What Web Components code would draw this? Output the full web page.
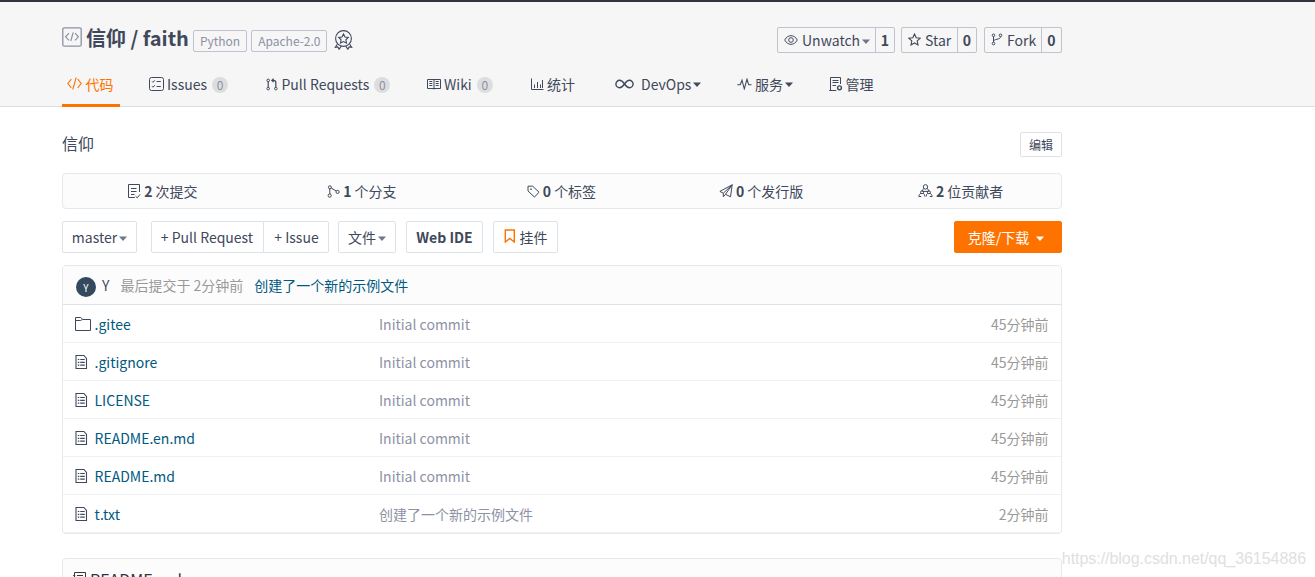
<!DOCTYPE html>
<html lang="zh-CN">
<head>
<meta charset="utf-8">
<title>信仰 / faith</title>
<style>
  html, body {
    margin: 0;
    height: 100%;
    overflow: hidden;
    background: #fff;
  }

  body {
    font-family: "Noto Sans CJK SC", sans-serif;
    font-size: 14px;
    line-height: 20px;
    color: #40485b;
  }
</style>
</head>
<body>
<repo-page></repo-page>

<script>
/**
 * <repo-icon> - Line icon
 *
 * @attr {string} name - key of ICONS
 */
const ICONS = {
  repo: [20, 20, '<rect x=".8" y=".8" width="18.4" height="18.4" rx="1.5" stroke-width="1.3"/><path d="M7 6.2 3.6 9.8 7 13.4M13 6.2l3.4 3.6-3.4 3.6M11.2 5.4 8.8 14" stroke-width="1.2"/>'],
  medal: [20, 20, '<circle cx="9.5" cy="8.5" r="7.9" stroke-width="1.1"/><path stroke-width="1.1" d="m9.5 4 1.5 3 3.300.5-2.400 2.300.6 3.200-3-1.500-3 1.500.6-3.200-2.400-2.300L8 7z"/><path stroke-width="1.100" d="m3.300 14.200-2 3 2.500-.3 1.300 2.300 2.200-3M15.700 14.200l2 3-2.500-.3-1.300 2.300-2.200-3"/>'],
  code: [15, 14, '<path stroke-width="1.100" d="M4.300 2.200.8 6.500l3.500 4.300M10.700 2.200l3.500 4.300-3.500 4.300M9.200.5 5.800 12.500"/>'],
  issues: [15, 14, '<rect x=".5" y=".5" width="14" height="13" rx="2"/><path d="m3 4.300 1 1 1.800-2M3 9.200l1 1 1.800-2M7.600 4.500h4.200M7.600 9.500h4.200"/>'],
  pull: [12, 13, '<circle cx="2.200" cy="2.400" r="1.300"/><circle cx="2.200" cy="10.600" r="1.300"/><circle cx="9.800" cy="10.600" r="1.300"/><path stroke-width="1.200" d="M2.200 3.800v5.400M9.800 9.200V4.600c0-1.500-.6-2.200-2-2.200H6M7.600.6 5.800 2.400l1.800 1.800"/>'],
  wiki: [14, 12, '<path d="M.5 1.500h13v9H.5zM7 1.500v10M2.300 3.500h3M2.300 5.500h3M2.300 7.500h3M8.700 3.500h3M8.700 5.500h3M8.700 7.500h3"/>'],
  chart: [13, 13, '<path d="M.5.5v11h12M3.500 6.500v3.500M6.500 4v6M9.500 6.500v3.500M11.500 2v8"/>'],
  infinity: [19, 10, '<path stroke-width="1.400" d="M9.500 5C7.600 2.300 6.400 1.300 4.600 1.300a3.700 3.700 0 0 0 0 7.400C6.400 8.700 7.600 7.700 9.500 5s3.100-3.700 4.900-3.700a3.700 3.700 0 0 1 0 7.400C12.600 8.700 11.400 7.700 9.500 5z"/>'],
  pulse: [15, 12, '<path stroke-width="1.100" d="M.3 6.800h2.900L5 2.200l2.300 8.600L10 1.200l1.700 5.600h2.800"/>'],
  manage: [14, 14, '<path d="M11.500 7V.5h-10v13h5.700M3.500 3.500h6M3.500 5.500h6M3.500 8.500h3.500M.2 13.500h7"/><circle cx="10.500" cy="10.800" r="1.900" stroke-width="1.400"/>'],
  eye: [14, 12, '<path d="M.7 6C3.800.2 10.200.2 13.300 6 10.200 11.800 3.800 11.800.7 6z"/><circle cx="7" cy="6" r="2.300"/>'],
  star: [13, 13, '<path stroke-width="1.100" d="m6.500 1 1.700 3.700 4 .5-3 2.700.8 4-3.500-2L3 11.900l.8-4-3-2.700 4-.5z"/>'],
  fork: [12, 13, '<circle cx="2.500" cy="2.300" r="1.300"/><circle cx="9.500" cy="2.300" r="1.300"/><circle cx="2.500" cy="10.500" r="1.300"/><path d="M2.500 3.700v5.400M9.500 3.700c0 3.400-7 1.700-7 5"/>'],
  commits: [14, 15, '<path d="M12.500 8V.5h-11v13h6.300M4 4.500h5.500M4 7.500h5.500M4 10.500h3.500M8.600 12.300l1.600 1.500 3-3.500"/>'],
  branch: [13, 13, '<circle cx="2.900" cy="2.300" r="1.500"/><circle cx="2.700" cy="10.600" r="1.600"/><circle cx="10.600" cy="6.900" r="1.600"/><path d="M2.800 3.800V9M4.200 3l5 3"/>'],
  tag: [13, 13, '<path d="M1 1.200h4.700l6.300 6-4.500 4.900L1 6z"/><circle cx="4" cy="4.200" r=".5"/>'],
  plane: [14, 14, '<path d="M13.200.8.9 7.400l3.400 1.800v3.600l2.200-2.500 5 2.500zM4.300 9.200 13.200.8 6.500 10.300"/>'],
  people: [15, 14, '<circle cx="7.500" cy="2.900" r="2.200"/><path d="M5.800 4.500C4.600 5.500 4.300 6.300 4.300 7.200M9.200 4.500c1.200 1 1.500 1.800 1.500 2.700M4.300 7.400h6.400"/><circle cx="4.100" cy="8.200" r="1.500"/><circle cx="10.900" cy="8.200" r="1.500"/><path d="M2.900 9.200C1.500 10.200.9 11.300.8 12.500h2.400M5.300 9.200c1 .9 1.500 1.900 1.600 3.300M9.700 9.200c-1 .9-1.500 1.900-1.600 3.300M12.100 9.200c1.400 1 2 2.100 2.100 3.300h-2.400"/>'],
  bookmark: [12, 14, '<path stroke-width="1.400" d="M1.300 1h9v12L5.800 9.500 1.300 13z"/>'],
  folder: [16, 14, '<path d="M.5 13.500V.5h5.300l2 2h7.700v11zM.5 3.500h5l2-1"/>'],
  file: [13, 14, '<path stroke-width="1.100" d="M1 .5h7.900l2.600 3v10H1z"/><path stroke-width="1.200" d="M2.800 4.500h1.500M5.200 4.500h4.600M2.800 7.300h1.500M5.200 7.300h4.600M2.800 10.200h1.500M5.200 10.200h4.600"/>'],
  readme: [13, 14, '<path d="M1.500 13V1.500h11V13M4 4.500h6M4 7.500h6M.2 7.500h2M.2 4.500h2"/>'],
  caret: [8, 5, '<path stroke="none" fill="currentColor" d="M0 .5h8L4 5z"/>']
};

class RepoIcon extends HTMLElement {
  constructor() {
    super();
    this.attachShadow({ mode: 'open' });
  }

  connectedCallback() {
    const [w, h, shape] = ICONS[this.getAttribute('name')];
    this.shadowRoot.innerHTML = `
      <style>
        :host { display: block; flex: none; width: ${w}px; height: ${h}px; }
        svg { display: block; }
      </style>
      <svg width="${w}" height="${h}" viewBox="0 0 ${w} ${h}" fill="none" stroke="currentColor">${shape}</svg>
    `;
  }
}
customElements.define('repo-icon', RepoIcon);

/**
 * <repo-tab> - Navigation tab
 *
 * @attr {string} icon
 * @attr {string} count - optional badge
 * @attr {boolean} caret
 * @attr {boolean} active
 */
class RepoTab extends HTMLElement {
  constructor() {
    super();
    this.attachShadow({ mode: 'open' });
  }

  connectedCallback() {
    const count = this.getAttribute('count');
    this.shadowRoot.innerHTML = `
      <style>
        :host {
          display: flex;
          align-items: center;
          box-sizing: border-box;
          height: 43px;
          padding: 0 5px 3px;
          justify-self: start;
          white-space: nowrap;
        }
        :host([active]) {
          width: 58px;
          color: #fe7300;
          box-shadow: inset 0 -3px #fe7300;
        }
        .label { margin-left: var(--gap, 3px); }
        .count {
          width: 16px;
          height: 16px;
          margin-left: 5px;
          margin-top: 2px;
          border-radius: 8px;
          background: #dcddde;
          color: #8c92a4;
          font-size: 12px;
          line-height: 16px;
          text-align: center;
        }
        .caret { margin: 1px 0 0 2px; }
      </style>
      <repo-icon name="${this.getAttribute('icon')}"></repo-icon>
      <span class="label"><slot></slot></span>
      ${count ? `<span class="count">${count}</span>` : ''}
      ${this.hasAttribute('caret') ? '<repo-icon class="caret" name="caret"></repo-icon>' : ''}
    `;
  }
}
customElements.define('repo-tab', RepoTab);

/**
 * <count-button> - Button with a counter on its right (watch, star, fork)
 *
 * @attr {string} icon
 * @attr {string} count
 * @attr {boolean} caret
 */
class CountButton extends HTMLElement {
  constructor() {
    super();
    this.attachShadow({ mode: 'open' });
  }

  connectedCallback() {
    this.shadowRoot.innerHTML = `
      <style>
        :host {
          display: flex;
          box-sizing: border-box;
          height: 26px;
          border: 1px solid #c0c2cf;
          border-radius: 2px;
          line-height: 25px;
        }
        .main {
          display: flex;
          flex: 1;
          align-items: center;
          padding-left: 6px;
        }
        .main repo-icon:first-child { margin-top: -1px; }
        .label { margin-left: 4px; }
        .caret { margin: 2px 0 0 2px; color: #70778a; }
        .count {
          box-sizing: border-box;
          width: var(--count-width, 19px);
          border-left: 1px solid #c0c2cf;
          font-weight: bold;
          text-align: center;
        }
      </style>
      <div class="main">
        <repo-icon name="${this.getAttribute('icon')}"></repo-icon>
        <span class="label"><slot></slot></span>
        ${this.hasAttribute('caret') ? '<repo-icon class="caret" name="caret"></repo-icon>' : ''}
      </div>
      <div class="count">${this.getAttribute('count')}</div>
    `;
  }
}
customElements.define('count-button', CountButton);

/**
 * <tool-button> - Toolbar button
 *
 * @attr {string} icon
 * @attr {boolean} caret
 * @attr {boolean} primary
 */
class ToolButton extends HTMLElement {
  constructor() {
    super();
    this.attachShadow({ mode: 'open' });
  }

  connectedCallback() {
    const icon = this.getAttribute('icon');
    this.shadowRoot.innerHTML = `
      <style>
        :host {
          display: flex;
          align-items: center;
          justify-content: center;
          box-sizing: border-box;
          height: 32px;
          border: 1px solid #dce3e8;
          border-radius: 2px;
          background: #fff;
          white-space: nowrap;
        }
        :host([primary]) {
          padding-right: 4px;
          border-color: #fe7300;
          background: #fe7300;
          color: #fff;
        }
        .icon { margin: -2px 4px 0 0; color: #fe7300; }
        .caret { margin: 2px 0 0 2px; color: #70778a; }
        :host([primary]) .caret { margin-left: 7px; color: #fff; }
      </style>
      ${icon ? `<repo-icon class="icon" name="${icon}"></repo-icon>` : ''}
      <slot></slot>
      ${this.hasAttribute('caret') ? '<repo-icon class="caret" name="caret"></repo-icon>' : ''}
    `;
  }
}
customElements.define('tool-button', ToolButton);

/**
 * <stat-item> - One figure of the summary bar
 *
 * @attr {string} icon
 * @attr {string} value
 */
class StatItem extends HTMLElement {
  constructor() {
    super();
    this.attachShadow({ mode: 'open' });
  }

  connectedCallback() {
    this.shadowRoot.innerHTML = `
      <style>
        :host {
          display: flex;
          align-items: center;
          justify-content: center;
          padding-right: 1px;
        }
        b { margin: 0 3px; }
      </style>
      <repo-icon name="${this.getAttribute('icon')}"></repo-icon>
      <b>${this.getAttribute('value')}</b>
      <slot></slot>
    `;
  }
}
customElements.define('stat-item', StatItem);

/**
 * <file-row> - Line of the file tree
 *
 * @attr {string} icon
 * @attr {string} message
 * @attr {string} time
 */
class FileRow extends HTMLElement {
  constructor() {
    super();
    this.attachShadow({ mode: 'open' });
  }

  connectedCallback() {
    this.shadowRoot.innerHTML = `
      <style>
        :host {
          display: grid;
          grid-template-columns: 19.5px 284.5px 1fr auto;
          align-items: center;
          box-sizing: border-box;
          height: 38px;
          padding: 1px 12.5px 0 12px;
          border-bottom: 1px solid #f0f3f5;
        }
        repo-icon { margin-top: -1px; }
        .name { color: #005980; }
        .message { color: #8c92a4; }
        .time { color: #999; }
      </style>
      <repo-icon name="${this.getAttribute('icon') || 'file'}"></repo-icon>
      <span class="name"><slot></slot></span>
      <span class="message">${this.getAttribute('message')}</span>
      <span class="time">${this.getAttribute('time')}</span>
    `;
  }
}
customElements.define('file-row', FileRow);

/**
 * <repo-header> - Repository title, actions and tabs
 */
class RepoHeader extends HTMLElement {
  constructor() {
    super();
    this.attachShadow({ mode: 'open' });
    this.shadowRoot.innerHTML = `
      <style>
        :host {
          display: block;
          box-sizing: border-box;
          height: 107px;
          padding-left: 62px;
          border-top: 2px solid #31343f;
          background: #f6f6f6;
          box-shadow: inset 0 -1px #dcdddf;
        }
        .top {
          display: flex;
          align-items: center;
          box-sizing: border-box;
          width: 1000px;
          height: 62px;
          padding-top: 14px;
        }
        .repo { margin: -6px 4px 0 0; color: #8c92a4; }
        h1 {
          margin: -4px 4px 0 0;
          font-size: 20px;
          line-height: 28px;
        }
        .label {
          box-sizing: border-box;
          height: 22px;
          margin: 2px 4px 0 0;
          padding: 0 6px;
          border: 1px solid #c0c2cf;
          border-radius: 2px;
          color: #8c92a4;
          font-size: 12px;
          line-height: 20px;
        }
        .medal { margin: 0 0 0 3px; }
        .actions {
          display: flex;
          margin-left: auto;
        }
        .watch { width: 118px; }
        .star { width: 76px; margin: 0 7px 0 6px; }
        .fork { width: 78px; --count-width: 20px; }
        nav {
          display: grid;
          grid-template-columns: 82px 116.5px 161.5px 104px 84px 122px 91.5px auto;
          justify-content: start;
        }
      </style>
      <div class="top">
        <repo-icon class="repo" name="repo"></repo-icon>
        <h1>信仰 / faith</h1>
        <span class="label">Python</span>
        <span class="label">Apache-2.0</span>
        <repo-icon class="medal" name="medal"></repo-icon>
        <div class="actions">
          <count-button class="watch" icon="eye" count="1" caret>Unwatch</count-button>
          <count-button class="star" icon="star" count="0">Star</count-button>
          <count-button class="fork" icon="fork" count="0">Fork</count-button>
        </div>
      </div>
      <nav>
        <repo-tab icon="code" style="--gap: 3.5px" active>代码</repo-tab>
        <repo-tab icon="issues" count="0">Issues</repo-tab>
        <repo-tab icon="pull" style="--gap: 4px" count="0">Pull Requests</repo-tab>
        <repo-tab icon="wiki" count="0">Wiki</repo-tab>
        <repo-tab icon="chart">统计</repo-tab>
        <repo-tab icon="infinity" style="--gap: 7px" caret>DevOps</repo-tab>
        <repo-tab icon="pulse" caret>服务</repo-tab>
        <repo-tab icon="manage">管理</repo-tab>
      </nav>
    `;
  }
}
customElements.define('repo-header', RepoHeader);

/**
 * <repo-page> - Whole page
 */
class RepoPage extends HTMLElement {
  constructor() {
    super();
    this.attachShadow({ mode: 'open' });
    this.shadowRoot.innerHTML = `
      <style>
        :host { display: block; }
        main {
          width: 1000px;
          margin-left: 62px;
        }
        .about {
          display: flex;
          justify-content: space-between;
          height: 25px;
          padding: 25px 0 16px;
          font-size: 16px;
          line-height: 22px;
        }
        .edit {
          width: 42px;
          height: 25px;
          font-size: 12px;
        }
        .stats {
          display: grid;
          grid-template-columns: repeat(5, 1fr);
          box-sizing: border-box;
          height: 36px;
          border: 1px solid #e3e9ed;
          border-radius: 4px;
          background: #fcfcfc;
        }
        .tools {
          display: flex;
          margin: 12px 0;
        }
        .master { width: 75px; margin-right: 14px; }
        .pr { width: 113px; padding-right: 1px; border-radius: 2px 0 0 2px; }
        .issue { width: 66px; margin-left: -1px; padding-left: 1px; border-radius: 0 2px 2px 0; }
        .files { width: 58px; margin: 0 10px 0 9px; }
        .ide { width: 77px; margin-right: 10px; font-weight: bold; }
        .widget { width: 65px; }
        .clone { width: 108px; margin-left: auto; }
        .tree {
          border: 1px solid #e3e9ed;
          border-radius: 4px;
          overflow: hidden;
        }
        .last {
          display: flex;
          align-items: center;
          box-sizing: border-box;
          height: 39px;
          padding: 0 13px 1px;
          border-bottom: 1px solid #dce3e8;
          background: #fcfcfc;
        }
        .avatar {
          width: 20px;
          height: 20px;
          margin: 4px 6px 0 0;
          border-radius: 50%;
          background: #34495e;
          color: #fff;
          font-size: 10px;
          line-height: 21px;
          text-align: center;
        }
        .when { margin: 0 11px; color: #999; }
        .commit { color: #005980; }
        .readme {
          display: flex;
          align-items: center;
          gap: 4px;
          box-sizing: border-box;
          height: 42px;
          margin-top: 24px;
          padding: 0 10px;
          border: 1px solid #e3e9ed;
          border-radius: 4px 4px 0 0;
          background: #fcfcfc;
          color: #303643;
          font-size: 16px;
        }
        .readme repo-icon { margin-top: -2px; }
        .watermark {
          position: absolute;
          right: 9px;
          bottom: 8px;
          color: #e0e0e0;
          font: 16px/20px "Liberation Sans", sans-serif;
          letter-spacing: -.04px;
        }
      </style>
      <repo-header></repo-header>
      <main>
        <div class="about">
          <span>信仰</span>
          <tool-button class="edit">编辑</tool-button>
        </div>
        <div class="stats">
          <stat-item icon="commits" value="2">次提交</stat-item>
          <stat-item icon="branch" value="1">个分支</stat-item>
          <stat-item icon="tag" value="0">个标签</stat-item>
          <stat-item icon="plane" value="0">个发行版</stat-item>
          <stat-item icon="people" value="2">位贡献者</stat-item>
        </div>
        <div class="tools">
          <tool-button class="master" caret>master</tool-button>
          <tool-button class="pr">+ Pull Request</tool-button>
          <tool-button class="issue">+ Issue</tool-button>
          <tool-button class="files" caret>文件</tool-button>
          <tool-button class="ide">Web IDE</tool-button>
          <tool-button class="widget" icon="bookmark">挂件</tool-button>
          <tool-button class="clone" primary caret>克隆/下载</tool-button>
        </div>
        <div class="tree">
          <div class="last">
            <span class="avatar">Y</span>
            <span>Y</span>
            <span class="when">最后提交于 2分钟前</span>
            <span class="commit">创建了一个新的示例文件</span>
          </div>
          <file-row icon="folder" message="Initial commit" time="45分钟前">.gitee</file-row>
          <file-row message="Initial commit" time="45分钟前">.gitignore</file-row>
          <file-row message="Initial commit" time="45分钟前">LICENSE</file-row>
          <file-row message="Initial commit" time="45分钟前">README.en.md</file-row>
          <file-row message="Initial commit" time="45分钟前">README.md</file-row>
          <file-row message="创建了一个新的示例文件" time="2分钟前">t.txt</file-row>
        </div>
        <div class="readme">
          <repo-icon name="readme"></repo-icon>
          <span>README.md</span>
        </div>
      </main>
      <div class="watermark">https://blog.csdn.net/qq_36154886</div>
    `;
  }
}
customElements.define('repo-page', RepoPage);
</script>
</body>
</html>
